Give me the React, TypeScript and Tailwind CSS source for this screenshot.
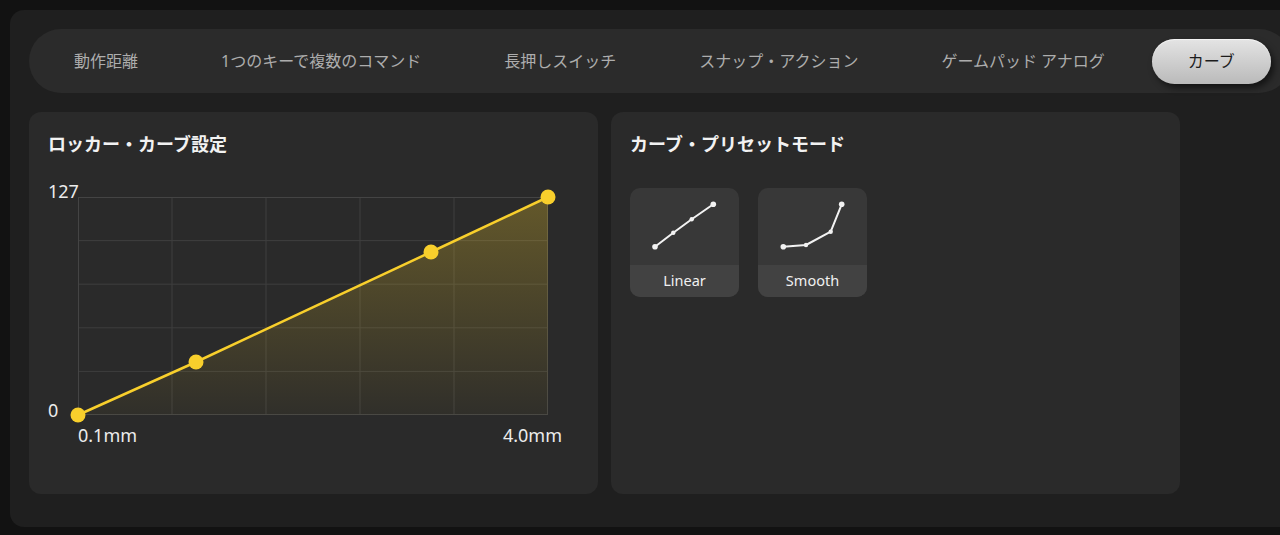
const tabs = ['動作距離', '1つのキーで複数のコマンド', '長押しスイッチ', 'スナップ・アクション', 'ゲームパッド アナログ', 'カーブ'];

// plot points in px inside the 470x218 grid
const points = [
  [0, 218],
  [118, 165],
  [353, 55],
  [470, 0],
];

const CurveChart = () => {
  const line = points.map(([x, y]) => `${x},${y}`).join(' ');
  const area = `0,218 ${line} 470,218`;

  return (
    <div className="mt-[26px]">
      <div className="flex">
        <div className="w-[30px] h-[237px] flex flex-col justify-between text-[18px] leading-none text-[#ececec]">
          <span>127</span>
          <span>0</span>
        </div>
        <svg width="470" height="218" viewBox="0 0 470 218" className="mt-[15px] overflow-visible">
          <defs>
            <linearGradient id="curveFill" x1="0" y1="0" x2="0" y2="1">
              <stop offset="0%" stopColor="#f8cf2c" stopOpacity="0.28" />
              <stop offset="100%" stopColor="#f8cf2c" stopOpacity="0.03" />
            </linearGradient>
          </defs>
          {[94, 188, 282, 376].map((x) => (
            <line key={x} x1={x} y1="0" x2={x} y2="218" stroke="#3e3e3e" strokeWidth="1" />
          ))}
          {[43.6, 87.2, 130.8, 174.4].map((y) => (
            <line key={y} x1="0" y1={y} x2="470" y2={y} stroke="#3e3e3e" strokeWidth="1" />
          ))}
          <rect x="0.5" y="0.5" width="469" height="217" fill="none" stroke="#444444" strokeWidth="1" />
          <polygon points={area} fill="url(#curveFill)" />
          <polyline points={line} fill="none" stroke="#f8cf2c" strokeWidth="2.5" strokeLinejoin="round" />
          {points.map(([x, y]) => (
            <circle key={x} cx={x} cy={y} r="7.5" fill="#f8cf2c" />
          ))}
        </svg>
      </div>
      <div className="ml-[30px] w-[484px] mt-[7px] flex justify-between text-[18px] leading-none text-[#ececec]">
        <span>0.1mm</span>
        <span>4.0mm</span>
      </div>
    </div>
  );
};

const PresetCard = ({ label, pts }: { label: string; pts: number[][] }) => (
  <div className="w-[109px] h-[109px] rounded-[10px] overflow-hidden bg-[#383838] flex flex-col">
    <svg width="109" height="77" viewBox="0 0 109 77">
      <polyline
        points={pts.map(([x, y]) => `${x},${y}`).join(' ')}
        fill="none"
        stroke="#f2f2f2"
        strokeWidth="2"
        strokeLinejoin="round"
      />
      {pts.map(([x, y], i) => (
        <circle key={i} cx={x} cy={y} r={i === 0 || i === pts.length - 1 ? 2.8 : 2.2} fill="#f2f2f2" />
      ))}
    </svg>
    <div className="flex-1 bg-[#424242] flex items-center justify-center text-[14.5px] text-[#f0f0f0]">{label}</div>
  </div>
);

export default function App() {
  return (
    <div
      className="h-[535px] overflow-hidden bg-[#121212] pt-[10px] pl-[10px]"
      style={{ fontFamily: '"Noto Sans", "Noto Sans CJK JP", sans-serif' }}
    >
      <div className="w-[1300px] h-[517px] rounded-[14px] bg-[#1f1f1f] p-[19px]">
        <div className="h-16 rounded-full bg-[#2b2b2b] flex items-center gap-[11px] pl-[9px]">
          {tabs.map((t) =>
            t === 'カーブ' ? (
              <div
                key={t}
                className="h-[45px] px-9 rounded-full flex items-center text-base text-[#1c1c1c] bg-gradient-to-b from-[#e4e4e4] to-[#bababa] shadow-[3px_4px_6px_rgba(0,0,0,0.55),inset_0_1px_1px_rgba(255,255,255,0.6)]"
              >
                {t}
              </div>
            ) : (
              <div key={t} className="h-[45px] px-9 flex items-center text-base text-[#adadad] whitespace-nowrap">
                {t}
              </div>
            ),
          )}
        </div>

        <div className="mt-[19px] flex gap-[13px]">
          <div className="w-[569px] h-[382px] rounded-xl bg-[#2a2a2a] px-[19px] pt-5">
            <h2 className="text-[18px] leading-6 font-bold text-[#f2f2f2]">ロッカー・カーブ設定</h2>
            <CurveChart />
          </div>
          <div className="w-[569px] h-[382px] rounded-xl bg-[#2a2a2a] px-[19px] pt-5">
            <h2 className="text-[18px] leading-6 font-bold text-[#f2f2f2]">カーブ・プリセットモード</h2>
            <div className="mt-8 flex gap-[19px]">
              <PresetCard label="Linear" pts={[[25, 58.7], [43.3, 44.7], [61.7, 31.3], [83.3, 16.3]]} />
              <PresetCard label="Smooth" pts={[[25.3, 58.7], [48, 57], [72.7, 43.7], [83.7, 16.3]]} />
            </div>
          </div>
        </div>
      </div>
    </div>
  );
}
